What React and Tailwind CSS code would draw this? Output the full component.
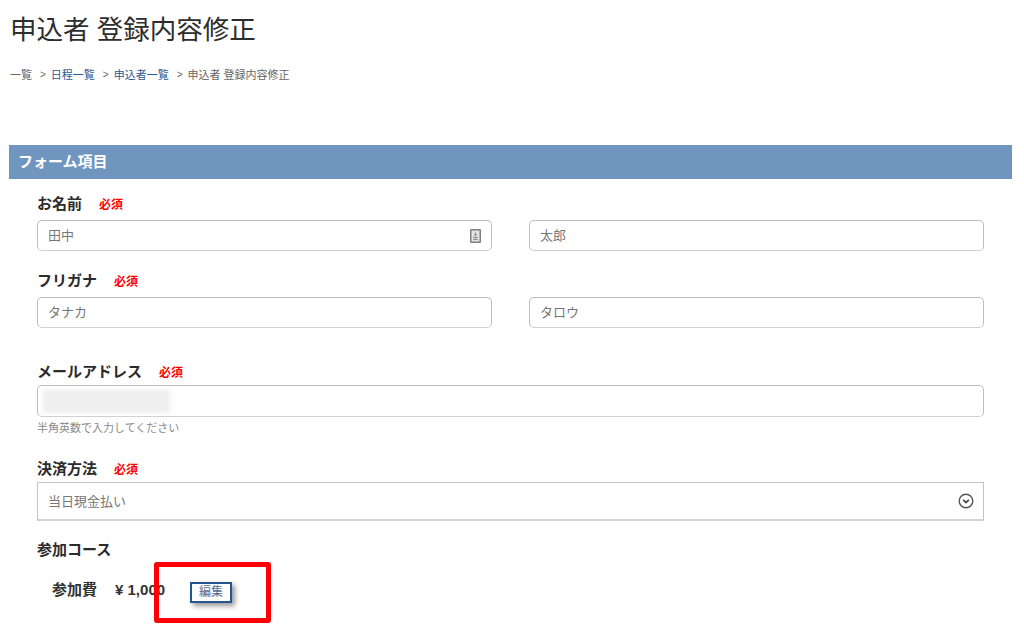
import React from "react";

const fontStack = { fontFamily: '"Liberation Sans", "Noto Sans CJK JP", sans-serif' };

function Required() {
  return <span className="mt-[4px] text-[12px] leading-none font-bold text-[#f00]">必須</span>;
}

function FieldLabel({ label }) {
  return (
    <div className="flex h-[20px] items-center gap-[17px]">
      <span className="text-[15px] leading-none font-bold text-[#2b2b2b]">{label}</span>
      <Required />
    </div>
  );
}

function TextBox({ value, children }) {
  return (
    <div className="flex h-[31px] items-center justify-between rounded-[5px] border border-[#bdbdbd] border-b-[#d0d0d0] bg-white pr-[10px] pl-[10px]">
      <span className="pb-[1px] text-[13px] leading-none text-[#777]">{value}</span>
      {children}
    </div>
  );
}

function ContactIcon() {
  return (
    <svg width="11" height="14" viewBox="0 0 11 14">
      <rect x="0.75" y="0.75" width="9.5" height="12.5" rx="0.5" fill="#e4e4e4" stroke="#808080" strokeWidth="1.5" />
      <path d="M5.5 3 4.2 6.6h2.6z" fill="#808080" />
      <path d="M3.4 8.4h4.2M3.4 10.4h4.2" stroke="#8c8c8c" strokeWidth="1.2" />
    </svg>
  );
}

function ChevronCircle() {
  return (
    <svg width="16" height="16" viewBox="0 0 16 16" fill="none">
      <circle cx="8" cy="8" r="6.8" stroke="#555" strokeWidth="1.4" />
      <path d="M5.2 6.9 8 9.6l2.8-2.7" stroke="#444" strokeWidth="1.7" />
    </svg>
  );
}

export default function App() {
  return (
    <div className="h-[630px] w-[1024px] overflow-hidden bg-white" style={fontStack}>
      <h1 className="pt-[15px] pl-[10px] text-[26.5px] leading-[31px] font-normal text-[#2d2d2d]">
        申込者 登録内容修正
      </h1>

      <nav className="mt-[21px] flex h-[16px] items-center pl-[10px] text-[11px] leading-none text-[#666]">
        <span>一覧</span>
        <span className="mr-[5px] ml-[8px] text-[10px]">&gt;</span>
        <a className="text-[#2c5a94]">日程一覧</a>
        <span className="mr-[5px] ml-[8px] text-[10px]">&gt;</span>
        <a className="text-[#2c5a94]">申込者一覧</a>
        <span className="mr-[5px] ml-[8px] text-[10px]">&gt;</span>
        <span>申込者 登録内容修正</span>
      </nav>

      <div className="mt-[62px] ml-[9px] flex h-[34px] w-[1003px] items-center bg-[#7095bf] pl-[9px] text-[15px] font-bold text-white">
        フォーム項目
      </div>

      <form className="ml-[37px] w-[947px] pt-[14px]">
        <FieldLabel label="お名前" />
        <div className="mt-[7px] grid grid-cols-[455px_455px] gap-x-[37px]">
          <TextBox value="田中">
            <ContactIcon />
          </TextBox>
          <TextBox value="太郎" />
        </div>

        <div className="mt-[19px]">
          <FieldLabel label="フリガナ" />
        </div>
        <div className="mt-[7px] grid grid-cols-[455px_455px] gap-x-[37px]">
          <TextBox value="タナカ" />
          <TextBox value="タロウ" />
        </div>

        <div className="mt-[33px]">
          <FieldLabel label="メールアドレス" />
        </div>
        <div className="mt-[4px] h-[32px] rounded-[5px] border border-[#bdbdbd] border-b-[#d0d0d0] bg-white pt-[3px] pl-[5px]">
          <div className="h-[24px] w-[127px] bg-[#efefef] blur-[2px]" />
        </div>
        <p className="mt-[3px] text-[11px] leading-[16px] text-[#8a8a8a]">半角英数で入力してください</p>

        <div className="mt-[22px]">
          <FieldLabel label="決済方法" />
        </div>
        <div className="mt-[4px] flex h-[39px] items-center justify-between border border-[#c4c4c4] border-b-2 border-b-[#d4d4d4] bg-white pr-[9px] pl-[10px]">
          <span className="text-[13px] leading-none text-[#777]">当日現金払い</span>
          <ChevronCircle />
        </div>

        <div className="mt-[18px] flex h-[20px] items-center text-[15px] leading-none font-bold text-[#2b2b2b]">
          参加コース
        </div>

        <div className="relative mt-[20px] flex h-[20px] items-center pl-[15px] text-[15px] leading-none font-bold text-[#333]">
          <span>参加費</span>
          <span className="ml-[18px]">¥ 1,000</span>
          <button
            type="button"
            className="mt-[6px] ml-[25px] flex h-[21px] w-[42px] shrink-0 items-center justify-center border-2 border-[#24558f] bg-white text-[12px] leading-none font-normal text-[#4f6d94] shadow-[3px_3px_5px_rgba(0,0,0,0.4)]"
          >
            編集
          </button>
          <div className="absolute top-[-17px] left-[117px] h-[61px] w-[117px] rounded-[3px] border-[5px] border-[#f00]" />
        </div>
      </form>
    </div>
  );
}
